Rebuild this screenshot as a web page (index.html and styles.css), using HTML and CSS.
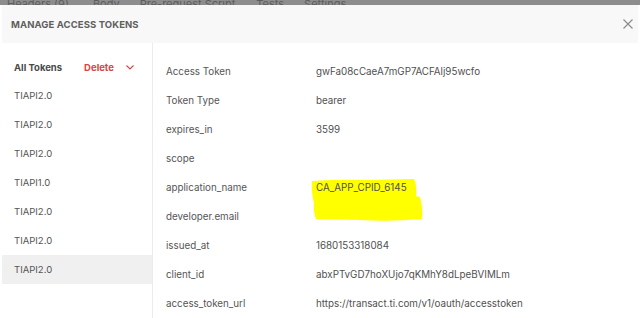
FILE: index.html
```html
<!DOCTYPE html>
<html lang="en">

<head>
    <meta charset="utf-8">
    <meta name="viewport" content="width=device-width, initial-scale=1.0">
    <title>Manage Access Tokens</title>
    <link rel="stylesheet" href="styles.css">
</head>

<body>

    <nav class="tabs">
        <span class="tab t1">Headers (9)</span>
        <span class="tab t2">Body</span>
        <span class="tab t3">Pre-request Script</span>
        <span class="tab t4">Tests</span>
        <span class="tab t5">Settings</span>
    </nav>

    <div class="modal">
        <header class="kop">
            <h1>MANAGE ACCESS TOKENS</h1>
            <button class="luk" aria-label="Close">
                <svg width="10" height="10" viewBox="0 0 10 10">
                    <path d="M0.5 0.5 L9.5 9.5 M9.5 0.5 L0.5 9.5" stroke="#8a8a8a" stroke-width="1.1" fill="none" />
                </svg>
            </button>
        </header>

        <div class="indhold">
            <aside class="liste">
                <div class="listeKop">
                    <span class="alle">All Tokens</span>
                    <span class="slet">Delete</span>
                    <svg class="pil" width="8" height="5" viewBox="0 0 8 5">
                        <path d="M0.5 0.5 L4 4 L7.5 0.5" stroke="#d64545" stroke-width="1.1" fill="none" />
                    </svg>
                </div>
                <div class="token">TIAPI2.0</div>
                <div class="token">TIAPI2.0</div>
                <div class="token">TIAPI2.0</div>
                <div class="token">TIAPI1.0</div>
                <div class="token">TIAPI2.0</div>
                <div class="token">TIAPI2.0</div>
                <div class="token valgt">TIAPI2.0</div>
            </aside>

            <section class="detaljer">
                <div class="raekke"><span class="navn">Access Token</span><span class="vaerdi">gwFa08cCaeA7mGP7ACFAlj95wcfo</span></div>
                <div class="raekke"><span class="navn">Token Type</span><span class="vaerdi">bearer</span></div>
                <div class="raekke"><span class="navn">expires_in</span><span class="vaerdi">3599</span></div>
                <div class="raekke"><span class="navn">scope</span><span class="vaerdi"></span></div>
                <div class="raekke"><span class="navn">application_name</span><span class="vaerdi">CA_APP_CPID_6145</span></div>
                <div class="raekke"><span class="navn">developer.email</span><span class="vaerdi"></span></div>
                <div class="raekke"><span class="navn">issued_at</span><span class="vaerdi">1680153318084</span></div>
                <div class="raekke"><span class="navn">client_id</span><span class="vaerdi">abxPTvGD7hoXUjo7qKMhY8dLpeBVIMLm</span></div>
                <div class="raekke"><span class="navn">access_token_url</span><span class="vaerdi">https://transact.ti.com/v1/oauth/accesstoken</span></div>

                <svg class="marker" width="120" height="46" viewBox="0 0 120 46">
                    <path d="M2 3 Q30 1 58 2 L104 1 Q107 6 106 18 L110 19 Q113 30 112 41 Q80 44 50 42 L6 41 Q3 33 4 25 Q1 14 2 3 Z" fill="#ffff00" />
                </svg>
            </section>
        </div>
    </div>

</body>

</html>
```

FILE: styles.css
```css
body {
    margin: 0;
    background: #fff;
    font-family: 'Inter', 'Noto Sans', sans-serif;
    font-size: 9.8px;
    color: #505050;
    width: 640px;
    height: 318px;
    overflow: hidden;
}

.tabs {
    height: 5px;
    overflow: hidden;
    background: #8d8d8d;
    display: flex;
}

.tab {
    color: #5e5e5e;
    font-size: 11px;
    line-height: 11px;
    margin-top: -1px;
    white-space: nowrap;
}

.t1 { margin-left: 7px; }
.t2 { margin-left: 24px; }
.t3 { margin-left: 20px; }
.t4 { margin-left: 21px; }
.t5 { margin-left: 20px; }

.modal {
    margin: 0 2px;
    background: #fff;
}

.kop {
    height: 38px;
    background: #f8f8f8;
    display: flex;
    align-items: center;
    justify-content: space-between;
    padding: 0 5px 0 9px;
}

.kop h1 {
    margin: 0;
    font-size: 9.5px;
    font-weight: 700;
    color: #5f5f5f;
    letter-spacing: 0.1px;
}

.luk {
    border: 0;
    background: none;
    padding: 0;
    display: flex;
}

.indhold {
    display: flex;
    height: 275px;
}

.liste {
    width: 150px;
    border-right: 1px solid #ececec;
    padding-top: 11px;
    font-size: 9.5px;
}

.listeKop {
    height: 27px;
    display: flex;
    align-items: center;
    padding-left: 12px;
}

.alle {
    font-weight: 700;
    color: #4a4a4a;
}

.slet {
    font-weight: 700;
    color: #d64545;
    margin-left: 22px;
}

.pil {
    margin-left: 12px;
}

.token {
    height: 29px;
    line-height: 29px;
    padding-left: 12px;
    color: #555;
}

.valgt {
    background: #f0f0f0;
}

.detaljer {
    flex: 1;
    padding: 14px 0 0 13px;
    position: relative;
}

.raekke {
    height: 29px;
    display: flex;
    align-items: center;
}

.navn {
    width: 150px;
    flex: none;
    color: #555;
}

.vaerdi {
    color: #505050;
    position: relative;
    z-index: 1;
}

.marker {
    position: absolute;
    left: 157px;
    top: 135px;
}
```
